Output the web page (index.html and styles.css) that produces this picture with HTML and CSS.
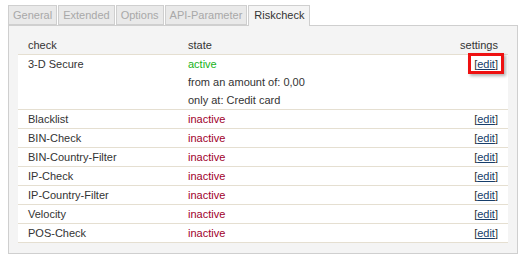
FILE: index.html
```html
<!DOCTYPE html>
<html>
<head>
<meta charset="utf-8">
<link rel="stylesheet" href="styles.css">
</head>
<body>
<div class="tabs">
  <div class="tab">General</div>
  <div class="tab">Extended</div>
  <div class="tab">Options</div>
  <div class="tab">API-Parameter</div>
  <div class="tab tab-active">Riskcheck</div>
</div>
<div class="panel">
  <table class="grid">
    <thead>
      <tr><th class="c1">check</th><th class="c2">state</th><th class="c3">settings</th></tr>
    </thead>
    <tbody>
      <tr>
        <td class="c1">3-D Secure</td>
        <td class="c2"><span class="active">active</span><br>from an amount of: 0,00<br>only at: Credit card</td>
        <td class="c3"><span class="hl">[<a href="#">edit</a>]<span class="mark"></span></span></td>
      </tr>
      <tr><td class="c1">Blacklist</td><td class="c2"><span class="inactive">inactive</span></td><td class="c3">[<a href="#">edit</a>]</td></tr>
      <tr><td class="c1">BIN-Check</td><td class="c2"><span class="inactive">inactive</span></td><td class="c3">[<a href="#">edit</a>]</td></tr>
      <tr><td class="c1">BIN-Country-Filter</td><td class="c2"><span class="inactive">inactive</span></td><td class="c3">[<a href="#">edit</a>]</td></tr>
      <tr><td class="c1">IP-Check</td><td class="c2"><span class="inactive">inactive</span></td><td class="c3">[<a href="#">edit</a>]</td></tr>
      <tr><td class="c1">IP-Country-Filter</td><td class="c2"><span class="inactive">inactive</span></td><td class="c3">[<a href="#">edit</a>]</td></tr>
      <tr><td class="c1">Velocity</td><td class="c2"><span class="inactive">inactive</span></td><td class="c3">[<a href="#">edit</a>]</td></tr>
      <tr><td class="c1">POS-Check</td><td class="c2"><span class="inactive">inactive</span></td><td class="c3">[<a href="#">edit</a>]</td></tr>
    </tbody>
  </table>
</div>
</body>
</html>
```
FILE: styles.css
```css
html, body { margin: 0; padding: 0; background: #fff; }
body {
  font-family: "Liberation Sans", Arial, sans-serif;
  font-size: 11px;
  color: #333;
  padding: 5px 6px 4px 8px;
}
.tabs { display: flex; height: 20px; position: relative; z-index: 1; }
.tab {
  box-sizing: border-box;
  height: 20px;
  line-height: 19px;
  padding: 0 4px;
  margin-right: 1px;
  background: #e9e9e9;
  border: 1px solid #cfcfcf;
  color: #a8a8a8;
}
.tab-active {
  height: 21px;
  background: #f4f4f4;
  color: #333;
  border-bottom: none;
  padding: 0 5px;
}
.panel {
  box-sizing: border-box;
  background: #f4f4f4;
  border: 1px solid #cfcfcf;
  padding: 10px 9px 10px 9px;
  height: 229px;
}
.grid { width: 490px; border-collapse: collapse; }
.grid th { font-weight: normal; text-align: left; line-height: 18px; padding: 0 10px; border-bottom: 1px solid #e5dfd1; }
.grid td { background: #fff; line-height: 18px; padding: 0 10px; border-bottom: 1px solid #e5dfd1; vertical-align: top; }
.grid .c1 { width: 140px; }
.grid .c3 { text-align: right; }
.active { color: #19b319; }
.inactive { color: #a0002b; }
a { color: #173e6a; text-decoration: underline; }
.hl { position: relative; display: inline-block; }
.mark {
  position: absolute;
  left: -6px; right: -6px; top: -2px; bottom: -1px;
  border: 3px solid #ee1111;
  box-shadow: 2px 2px 3px rgba(0,0,0,0.3);
}
```
